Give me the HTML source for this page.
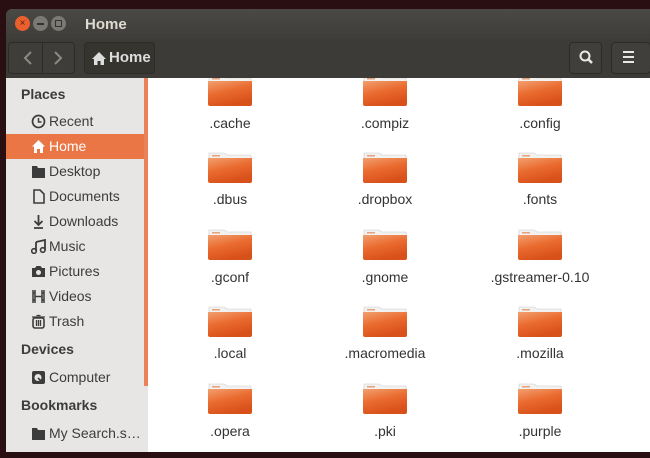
<!DOCTYPE html>
<html><head><style>
*{margin:0;padding:0;box-sizing:border-box}
body{width:650px;height:458px;background:#2a0f12;position:relative;overflow:hidden;font-family:"Liberation Sans","DejaVu Sans",sans-serif}
.win{position:absolute;left:6px;top:9px;width:650px;height:443px;background:#3c3b37;border-radius:6px 6px 0 0;overflow:hidden}
.title{position:absolute;left:0;top:0;width:100%;height:30px;background:linear-gradient(#4a4945,#3e3d39)}
.btn{position:absolute;top:7px;width:15px;height:15px;border-radius:50%}
.tt{position:absolute;left:79px;top:7px;color:#dfdbd2;font-weight:bold;font-size:15px}
.tool{position:absolute;left:0;top:30px;width:100%;height:39px;background:#3c3b37}
.tb{position:absolute;top:3px;height:32px;border:1px solid #2c2b28;border-radius:4px;background:#403f3b;color:#ddd}
.side{position:absolute;left:0;top:69px;width:142px;height:374px;background:#e7e6e4}
.sb{position:absolute;left:138px;top:69px;width:4px;height:308px;background:#e9825a}
.content{position:absolute;left:142px;top:69px;width:508px;height:374px;background:#fff}
.h{position:absolute;left:15px;font-weight:bold;font-size:14px;color:#3c3c3c}
.it{position:absolute;left:0;width:138px;height:25px;font-size:14px;color:#3c3c3c;padding-left:43px;line-height:25px}
.ic{position:absolute;left:25px;top:5px;width:15px;height:15px}
.f{position:absolute;width:46px;height:32px}
.lab{position:absolute;width:140px;text-align:center;font-size:14px;color:#333}
</style></head><body>
<div class="win">
 <div class="title">
  <div class="btn" style="left:9px;background:#e9602e;color:#5a1a05;font-size:10px;text-align:center;line-height:15px">×</div>
  <div class="btn" style="left:27px;background:#7a7974"><div style="position:absolute;left:4px;top:7px;width:7px;height:1.5px;background:#333"></div></div>
  <div class="btn" style="left:45px;background:#7a7974"><div style="position:absolute;left:4px;top:4px;width:7px;height:7px;border:1.5px solid #333"></div></div>
  <div class="tt">Home</div>
 </div>
 <div class="tool">
  <div class="tb" style="left:2px;width:67px;background:#3e3d39"><div style="position:absolute;left:33px;top:0;width:1px;height:30px;background:#2c2b28"></div>
   <svg width="67" height="30" style="position:absolute;left:0;top:0"><path d="M22 9 L16 15 L22 21" stroke="#8a8984" stroke-width="2" fill="none"/><path d="M46 9 L52 15 L46 21" stroke="#8a8984" stroke-width="2" fill="none"/></svg></div>
  <div class="tb" style="left:78px;width:71px;background:#35342f;font-weight:bold;font-size:15px;line-height:30px;padding-left:24px">Home
   <svg width="14" height="13" style="position:absolute;left:7px;top:9px"><path d="M7 0 L14 7 L12 7 L12 13 L8.5 13 L8.5 9 L5.5 9 L5.5 13 L2 13 L2 7 L0 7Z" fill="#ddd"/></svg></div>
  <div class="tb" style="left:563px;width:33px"><svg width="33" height="30"><circle cx="15" cy="13" r="4.5" stroke="#e8e8e8" stroke-width="2" fill="none"/><path d="M18 16 L22 20" stroke="#e8e8e8" stroke-width="2.5"/></svg></div>
  <div class="tb" style="left:605px;width:40px"><svg width="33" height="30"><path d="M11 9h11M11 14h11M11 19h11" stroke="#e8e8e8" stroke-width="2"/></svg></div>
 </div>
 <div class="side">
  <div class="h" style="top:8px">Places</div>
  <div class="it" style="top:31px"><svg class="ic" viewBox="0 0 15 15"><circle cx="7.5" cy="7.5" r="6" stroke="#3c3c3c" stroke-width="1.7" fill="none"/><path d="M7.5 4v4h3" stroke="#3c3c3c" stroke-width="1.5" fill="none"/></svg>Recent</div>
  <div class="it" style="top:56px;background:#ea7545;color:#fff"><svg class="ic" viewBox="0 0 15 15"><path d="M7.5 1 L14 7.5 L12 7.5 L12 14 L9 14 L9 10 L6 10 L6 14 L3 14 L3 7.5 L1 7.5Z" fill="#fff"/></svg>Home</div>
  <div class="it" style="top:81px"><svg class="ic" viewBox="0 0 15 15"><path d="M1 2h5l1 2h7v10H1z" fill="#3c3c3c"/></svg>Desktop</div>
  <div class="it" style="top:106px"><svg class="ic" viewBox="0 0 15 15"><path d="M3 1h6l4 4v9H3z" stroke="#3c3c3c" stroke-width="1.6" fill="none"/></svg>Documents</div>
  <div class="it" style="top:131px"><svg class="ic" viewBox="0 0 15 15"><path d="M7.5 1v9M3.5 7l4 4 4-4M3 14h9" stroke="#3c3c3c" stroke-width="1.8" fill="none"/></svg>Downloads</div>
  <div class="it" style="top:156px"><svg class="ic" viewBox="0 0 15 15"><path d="M5 3l9-2v10M5 3v9" stroke="#3c3c3c" stroke-width="1.8" fill="none"/><circle cx="3" cy="12" r="2.3" stroke="#3c3c3c" stroke-width="1.6" fill="none"/><circle cx="11.8" cy="11" r="2.3" stroke="#3c3c3c" stroke-width="1.6" fill="none"/></svg>Music</div>
  <div class="it" style="top:181px"><svg class="ic" viewBox="0 0 15 15"><path d="M1 4h3l1.5-2h4L11 4h3v9H1z" fill="#3c3c3c"/><circle cx="7.5" cy="8.5" r="2.5" fill="#e7e6e4"/></svg>Pictures</div>
  <div class="it" style="top:206px"><svg class="ic" viewBox="0 0 15 15"><path d="M2 1v13M13 1v13M4 1v13M11 1v13M4 7.5h7M2 4h2M2 11h2M11 4h2M11 11h2" stroke="#3c3c3c" stroke-width="1.5"/></svg>Videos</div>
  <div class="it" style="top:231px"><svg class="ic" viewBox="0 0 15 15"><rect x="2" y="4" width="11" height="10" rx="2" stroke="#3c3c3c" stroke-width="1.6" fill="none"/><path d="M1 3h13M5.5 1.5h4M5.5 6v6M7.5 6v6M9.5 6v6" stroke="#3c3c3c" stroke-width="1.3"/></svg>Trash</div>
  <div class="h" style="top:263px">Devices</div>
  <div class="it" style="top:287px"><svg class="ic" viewBox="0 0 15 15"><rect x="1" y="1" width="13" height="13" rx="2" fill="#3c3c3c"/><circle cx="7" cy="7.5" r="3.5" fill="#e7e6e4"/><path d="M7 8l4 4" stroke="#3c3c3c" stroke-width="1.6"/></svg>Computer</div>
  <div class="h" style="top:319px">Bookmarks</div>
  <div class="it" style="top:343px"><svg class="ic" viewBox="0 0 15 15"><path d="M1 2h5l1 2h7v10H1z" fill="#3c3c3c"/></svg>My Search.s…</div>
 </div>
 <div class="sb"></div>
</div>
<svg width="0" height="0" style="position:absolute"><defs>
<linearGradient id="g" x1="0" y1="0" x2="0.4" y2="1"><stop offset="0" stop-color="#f2a070"/><stop offset="0.5" stop-color="#ea6b2f"/><stop offset="1" stop-color="#d8501a"/></linearGradient>
<symbol id="fo" viewBox="0 0 46 32"><path d="M2 1h15l3 2h24v6H2z" fill="#f2f2f0" stroke="#ccc" stroke-width="0.6"/><rect x="5" y="3" width="8" height="1.5" fill="#e6a07a"/><path d="M1 6h44v23a2 2 0 0 1-2 2H3a2 2 0 0 1-2-2z" fill="url(#g)"/></symbol>
</defs></svg>
<div style="position:absolute;left:148px;top:78px;width:502px;height:374px;overflow:hidden;background:#fff">
 <div style="position:relative;top:-78px;left:-148px">
  <svg class="f" style="left:207px;top:75px"><use href="#fo"/></svg>
  <svg class="f" style="left:362px;top:75px"><use href="#fo"/></svg>
  <svg class="f" style="left:517px;top:75px"><use href="#fo"/></svg>
  <svg class="f" style="left:207px;top:152px"><use href="#fo"/></svg>
  <svg class="f" style="left:362px;top:152px"><use href="#fo"/></svg>
  <svg class="f" style="left:517px;top:152px"><use href="#fo"/></svg>
  <svg class="f" style="left:207px;top:229px"><use href="#fo"/></svg>
  <svg class="f" style="left:362px;top:229px"><use href="#fo"/></svg>
  <svg class="f" style="left:517px;top:229px"><use href="#fo"/></svg>
  <svg class="f" style="left:207px;top:306px"><use href="#fo"/></svg>
  <svg class="f" style="left:362px;top:306px"><use href="#fo"/></svg>
  <svg class="f" style="left:517px;top:306px"><use href="#fo"/></svg>
  <svg class="f" style="left:207px;top:383px"><use href="#fo"/></svg>
  <svg class="f" style="left:362px;top:383px"><use href="#fo"/></svg>
  <svg class="f" style="left:517px;top:383px"><use href="#fo"/></svg>
  <div class="lab" style="left:160px;top:115px">.cache</div>
  <div class="lab" style="left:315px;top:115px">.compiz</div>
  <div class="lab" style="left:470px;top:115px">.config</div>
  <div class="lab" style="left:160px;top:191px">.dbus</div>
  <div class="lab" style="left:315px;top:191px">.dropbox</div>
  <div class="lab" style="left:470px;top:191px">.fonts</div>
  <div class="lab" style="left:160px;top:269px">.gconf</div>
  <div class="lab" style="left:315px;top:269px">.gnome</div>
  <div class="lab" style="left:470px;top:269px">.gstreamer-0.10</div>
  <div class="lab" style="left:160px;top:345px">.local</div>
  <div class="lab" style="left:315px;top:345px">.macromedia</div>
  <div class="lab" style="left:470px;top:345px">.mozilla</div>
  <div class="lab" style="left:160px;top:423px">.opera</div>
  <div class="lab" style="left:315px;top:423px">.pki</div>
  <div class="lab" style="left:470px;top:423px">.purple</div>
 </div>
</div>
</body></html>
